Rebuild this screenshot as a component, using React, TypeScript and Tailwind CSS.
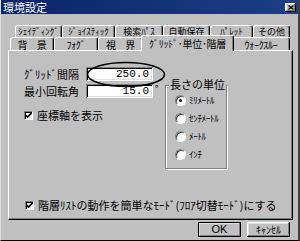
import React from "react";

const raised =
  "shadow-[inset_-1px_-1px_#000,inset_1px_1px_#fff,inset_-2px_-2px_#808080,inset_2px_2px_#dfdfdf]";
const sunken =
  "shadow-[inset_1px_1px_#808080,inset_-1px_-1px_#fff,inset_2px_2px_#000,inset_-2px_-2px_#dfdfdf]";

function Tab({ label, w, active }: { label: string; w: number; active?: boolean }) {
  if (active) {
    return (
      <div
        style={{ width: w }}
        className="relative z-10 -mx-[2px] -mt-[2px] mb-[-1px] h-[16px] flex items-center justify-center whitespace-nowrap bg-[#c0c0c0] border-t border-l border-r border-t-white border-l-white border-r-black rounded-t-[3px] shadow-[inset_-1px_0_#808080]"
      >
        <span className="leading-[10px] mt-[1px]">{label}</span>
      </div>
    );
  }
  return (
    <div
      style={{ width: w }}
      className="h-full flex items-center justify-center whitespace-nowrap overflow-hidden bg-[#c0c0c0] border-t border-l border-r border-t-white border-l-white border-r-black rounded-t-[3px] shadow-[inset_-1px_0_#808080]"
    >
      <span className="leading-[9px]">{label}</span>
    </div>
  );
}

function Check({ label }: { label: string }) {
  return (
    <div className="flex items-center gap-[4px] whitespace-nowrap">
      <div className="w-[9px] h-[9px] bg-white flex items-center justify-center border border-t-[#808080] border-l-[#808080] border-r-white border-b-white shadow-[inset_1px_1px_#000]">
        <svg width="7" height="7" viewBox="0 0 7 7">
          <path d="M0.5 3 L2.5 5 L6.5 1" stroke="#000" strokeWidth="1.6" fill="none" />
        </svg>
      </div>
      <span>{label}</span>
    </div>
  );
}

function Radio({ label, checked }: { label: string; checked?: boolean }) {
  return (
    <div className="flex items-center gap-[3px] h-[18px] whitespace-nowrap">
      <div className="w-[11px] h-[11px] shrink-0 rounded-full bg-white flex items-center justify-center border border-t-[#808080] border-l-[#808080] border-r-white border-b-white shadow-[inset_1px_1px_#404040]">
        {checked && <div className="w-[3px] h-[3px] rounded-full bg-black" />}
      </div>
      <span className="text-[9px] tracking-[-0.3px]">{label}</span>
    </div>
  );
}

export default function App() {
  return (
    <div
      className="w-[300px] h-[241px] bg-[#c0c0c0] flex flex-col border-l border-l-[#dfdfdf] border-b border-b-black border-r-2 border-r-[#404040] text-[11px] leading-none text-black"
      style={{ fontFamily: '"Noto Sans CJK JP", "Noto Sans", sans-serif' }}
    >
      {/* title bar */}
      <div className="h-[14px] flex items-center justify-between bg-gradient-to-r from-[#0a246a] to-[#1c3f86] pl-[2px] pr-[2px]">
        <span className="text-white text-[11px] leading-[12px]">環境設定</span>
        <div className={`w-[11px] h-[9px] bg-[#c0c0c0] ${raised} flex items-center justify-center`}>
          <svg width="6" height="5" viewBox="0 0 6 5">
            <path d="M0.5 0.5 L5.5 4.5 M5.5 0.5 L0.5 4.5" stroke="#000" strokeWidth="1.3" />
          </svg>
        </div>
      </div>

      <div className="flex-1 flex flex-col px-[7px] pt-[11px]">
        {/* back row */}
        <div className="h-[12px] flex pl-[7px] text-[9px]">
          <Tab label="ｼｪｲﾃﾞｨﾝｸﾞ" w={47} />
          <Tab label="ｼﾞｮｲｽﾃｨｯｸ" w={53} />
          <Tab label="検索ﾊﾟｽ" w={48} />
          <Tab label="自動保存" w={47} />
          <Tab label="ﾊﾟﾚｯﾄ" w={43} />
          <Tab label="その他" w={37} />
        </div>
        {/* front row */}
        <div className="h-[13px] flex items-end pl-[2px] text-[10px] tracking-[-0.3px]">
          <div className="h-[13px] flex">
            <Tab label="背　景" w={44} />
            <Tab label="ﾌｫｸﾞ" w={44} />
            <Tab label="視　界" w={45} />
          </div>
          <Tab label="ｸﾞﾘｯﾄﾞ･単位･階層" w={93} active />
          <div className="h-[13px] flex">
            <Tab label="ｳｫｰｸｽﾙｰ" w={58} />
          </div>
        </div>

        {/* panel */}
        <div className="h-[170px] w-[285px] flex flex-col bg-[#c0c0c0] border-t border-l border-t-white border-l-white border-r border-b border-r-black border-b-black shadow-[inset_-1px_-1px_#808080]">
          <div className="flex pl-[15px] pt-[16px]">
            <div className="w-[141px] shrink-0 flex flex-col relative">
              <div className="flex items-center h-[14px]">
                <span className="w-[62px] whitespace-nowrap">ｸﾞﾘｯﾄﾞ間隔</span>
                <div className={`w-[67px] h-[14px] bg-white ${sunken} flex items-center justify-end pr-[4px] font-['Liberation_Mono',monospace] text-[11px]`}>
                  250.0
                </div>
              </div>
              <div className="flex items-start h-[14px] mt-[3px]">
                <span className="w-[62px] self-center whitespace-nowrap">最小回転角</span>
                <div className={`w-[67px] h-[14px] bg-white ${sunken} flex items-center justify-end pr-[4px] font-['Liberation_Mono',monospace] text-[11px]`}>
                  15.0
                </div>
                <span className="ml-[2px] text-[9px]">°</span>
              </div>
              <div className="mt-[12px]">
                <Check label="座標軸を表示" />
              </div>
              {/* hand-drawn ellipse annotation */}
              <svg className="absolute left-[62px] top-[-6px]" width="80" height="27" viewBox="0 0 80 27">
                <ellipse cx="40" cy="13.5" rx="38.5" ry="12" fill="none" stroke="#000" strokeWidth="1.6" />
              </svg>
            </div>

            {/* group box */}
            <div className="relative mt-[18px] w-[62px] h-[84px] border border-[#808080] shadow-[1px_1px_#fff,inset_1px_1px_#fff] flex flex-col pl-[9px] pt-[5px]">
              <span className="absolute -top-[7px] left-[3px] px-[1px] bg-[#c0c0c0] whitespace-nowrap text-[11px]">長さの単位</span>
              <Radio label="ﾐﾘﾒｰﾄﾙ" checked />
              <Radio label="ｾﾝﾁﾒｰﾄﾙ" />
              <Radio label="ﾒｰﾄﾙ" />
              <Radio label="ｲﾝﾁ" />
            </div>
          </div>

          <div className="mt-auto pl-[16px] pb-[8px]">
            <Check label="階層ﾘｽﾄの動作を簡単なﾓｰﾄﾞ(ﾌﾛｱ切替ﾓｰﾄﾞ)にする" />
          </div>
        </div>

        {/* buttons */}
        <div className="flex justify-end gap-[6px] mt-[2px] pr-[1px]">
          <button className={`w-[43px] h-[15px] bg-[#c0c0c0] ${raised} outline outline-1 outline-black -outline-offset-1 text-[11px] leading-none font-['Liberation_Sans',sans-serif]`}>
            OK
          </button>
          <button className={`w-[43px] h-[15px] bg-[#c0c0c0] ${raised} text-[10px] leading-none`}>
            ｷｬﾝｾﾙ
          </button>
        </div>
      </div>
    </div>
  );
}
